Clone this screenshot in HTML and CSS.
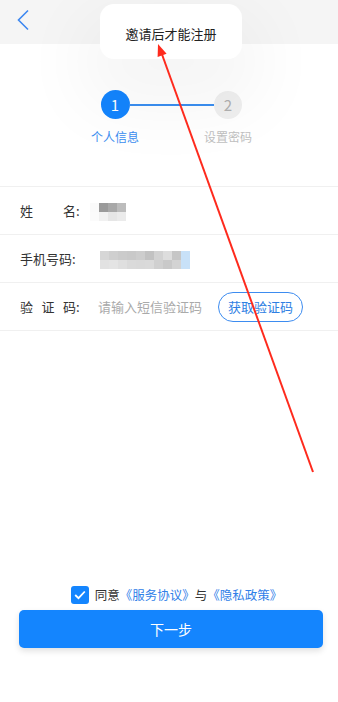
FILE: index.html
```html
<!DOCTYPE html>
<html lang="zh-CN">
<head>
  <meta charset="UTF-8">
  <meta name="viewport" content="width=device-width, initial-scale=1.0">
  <title>注册 - 个人信息</title>
  <link rel="stylesheet" href="styles.css">
</head>
<body>
  <div class="page">
    <header class="top-bar">
      <svg class="back-icon" width="14" height="22" viewBox="0 0 14 22">
        <polyline points="11,1.5 1.5,11 11,20.5" fill="none" stroke="#3d87f0" stroke-width="1.6"/>
      </svg>
    </header>

    <section class="steps">
      <div class="step-circle active">1</div>
      <div class="step-line"></div>
      <div class="step-circle">2</div>
      <div class="step-label active">个人信息</div>
      <div></div>
      <div class="step-label">设置密码</div>
    </section>

    <div class="form">
      <div class="form-row">
        <div class="form-label"><span class="label-chars"><span>姓</span><span>名</span></span>:</div>
        <div class="mosaic mosaic-name"></div>
      </div>
      <div class="form-row">
        <div class="form-label"><span>手机号码</span>:</div>
        <div class="mosaic mosaic-phone"></div>
      </div>
      <div class="form-row">
        <div class="form-label"><span class="label-chars"><span>验</span><span>证</span><span>码</span></span>:</div>
        <input class="code-input" type="text" placeholder="请输入短信验证码">
        <button type="button" class="btn-code">获取验证码</button>
      </div>
    </div>

    <div class="bottom">
      <div class="agree">
        <span class="checkbox">
          <svg width="12" height="10" viewBox="0 0 12 10">
            <polyline points="1.2,5 4.5,8.2 10.8,1.5" fill="none" stroke="#fff" stroke-width="1.8"/>
          </svg>
        </span>
        <span class="agree-text">同意<a class="link"><span class="bk-open">《</span>服务协议<span class="bk-close">》</span></a>与<a class="link"><span class="bk-open">《</span>隐私政策<span class="bk-close">》</span></a></span>
      </div>
      <button type="button" class="btn-next">下一步</button>
    </div>

    <div class="toast">邀请后才能注册</div>

    <!-- annotation arrow drawn over the screen -->
    <svg class="annotation" width="338" height="702" viewBox="0 0 338 702">
      <line x1="313" y1="472" x2="161.5" y2="53" stroke="#fe2a1d" stroke-width="2"/>
      <polygon points="158,44 166.6,53.8 157.6,57" fill="#fe2a1d"/>
    </svg>
  </div>
</body>
</html>
```

FILE: styles.css
```css
:root {
  --color-primary: #1485fe;
  --color-link: #2f80e8;
  --color-text: #333333;
  --color-muted: #aaaaaa;
  --color-line: #f0f0f0;
  --color-bar: #f5f5f5;
}

* {
  margin: 0;
  padding: 0;
  box-sizing: border-box;
  font-family: "Noto Sans CJK SC", "Noto Sans", sans-serif;
}

body {
  background: #ffffff;
  color: var(--color-text);
}

.page {
  position: relative;
  width: 338px;
  min-height: 702px;
  display: flex;
  flex-direction: column;
  overflow: hidden;
}

.top-bar {
  height: 44px;
  background: var(--color-bar);
  display: flex;
  align-items: center;
  padding-left: 17px;
  padding-bottom: 4px;
}

/* steps */
.steps {
  display: grid;
  grid-template-columns: 64px 49px 64px;
  justify-content: center;
  justify-items: center;
  align-items: center;
  padding: 46px 0 41px 5px;
}

.step-circle {
  width: 28px;
  height: 28px;
  border-radius: 50%;
  background: #efefef;
  color: #b0b0b0;
  font-size: 15px;
  display: flex;
  align-items: center;
  justify-content: center;
}

.step-circle.active {
  width: 29px;
  height: 29px;
  background: var(--color-primary);
  color: #ffffff;
}

.step-line {
  justify-self: stretch;
  height: 2px;
  margin: 0 -18px 0 -18px;
  background: #3b8ef0;
}

.step-label {
  margin-top: 9px;
  font-size: 12px;
  line-height: 17px;
  color: #c0c0c0;
}

.step-label.active {
  color: #3b8ef0;
}

/* form */
.form {
  border-top: 1px solid var(--color-line);
}

.form-row {
  height: 48px;
  border-bottom: 1px solid var(--color-line);
  display: flex;
  align-items: center;
  padding-left: 20px;
  font-size: 13px;
}

.form-label {
  width: 78px;
  display: flex;
  color: var(--color-text);
}

.label-chars {
  width: 56px;
  display: flex;
  justify-content: space-between;
}

.mosaic {
  height: 18px;
}

.mosaic-name {
  width: 36px;
  margin-left: -8px;
  margin-top: 2px;
  background:
    linear-gradient(to right, #fafafa 0 9px, #9a9a9a 9px 18px, #a8a8a8 18px 27px, #bcbcbc 27px 36px) top / 100% 50% no-repeat,
    linear-gradient(to right, #fbfbfb 0 9px, #f1f1f1 9px 18px, #e6e6e6 18px 27px, #ebebeb 27px 36px) bottom / 100% 50% no-repeat;
}

.mosaic-phone {
  width: 90px;
  margin-left: 2px;
  margin-top: 3px;
  background:
    linear-gradient(to right, #d6d6d6 0 9px, #cfcfcf 9px 18px, #cbcbcb 18px 27px, #c9c9c9 27px 36px, #cdcdcd 36px 45px, #c2c2c2 45px 54px, #d2d2d2 54px 63px, #dddddd 63px 72px, #c6c6c6 72px 81px, #c8e1f8 81px 90px) top / 100% 50% no-repeat,
    linear-gradient(to right, #e2e2e2 0 9px, #e4e4e4 9px 18px, #dfdfdf 18px 27px, #dadada 27px 36px, #d9d9d9 36px 45px, #dadada 45px 54px, #d0d0d0 54px 63px, #c9c9c9 63px 72px, #d3d3d3 72px 81px, #c8e1f8 81px 90px) bottom / 100% 50% no-repeat;
}

.code-input {
  width: 114px;
  border: none;
  outline: none;
  font-size: 13px;
  color: var(--color-text);
  background: transparent;
}

.code-input::placeholder {
  color: var(--color-muted);
}

.btn-code {
  margin-left: 6px;
  width: 85px;
  height: 30px;
  border: 1px solid #3d8cf0;
  border-radius: 15px;
  background: #ffffff;
  color: #2f7fe3;
  font-size: 13px;
}

/* bottom */
.bottom {
  margin-top: auto;
  padding-bottom: 54px;
}

.agree {
  display: flex;
  align-items: center;
  justify-content: center;
  gap: 6px;
  padding-left: 15px;
  font-size: 12.5px;
  color: var(--color-text);
}

/* full-width brackets, one em each */
.bk-open,
.bk-close {
  display: inline-block;
  width: 1em;
}

.bk-open {
  text-align: right;
}

.bk-close {
  text-align: left;
}

.checkbox {
  width: 18px;
  height: 18px;
  border-radius: 3px;
  background: var(--color-primary);
  display: flex;
  align-items: center;
  justify-content: center;
}

.link {
  color: var(--color-link);
}

.btn-next {
  display: block;
  width: 304px;
  height: 38px;
  margin: 6px 0 0 19px;
  border: none;
  border-radius: 5px;
  background: var(--color-primary);
  color: #ffffff;
  font-size: 14px;
  box-shadow: 0 3px 6px rgba(0, 0, 0, 0.12);
}

/* overlays */
.toast {
  position: absolute;
  left: 100px;
  top: 4px;
  width: 142px;
  height: 55px;
  padding-top: 3px;
  border-radius: 14px;
  background: #ffffff;
  display: flex;
  align-items: center;
  justify-content: center;
  font-size: 13px;
  color: #222222;
  box-shadow: 0 30px 70px 20px rgba(0, 0, 0, 0.045);
}

.annotation {
  position: absolute;
  left: 0;
  top: 0;
  pointer-events: none;
}
```
